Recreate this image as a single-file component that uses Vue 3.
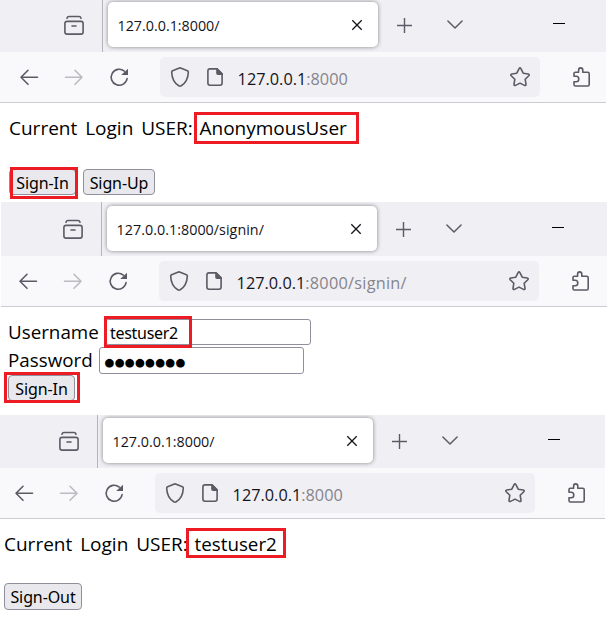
<script setup>
const windows = [
  { id: 'home', tab: '127.0.0.1:8000/', port: ':8000', user: 'AnonymousUser', buttons: ['Sign-In', 'Sign-Up'] },
  { id: 'signin', tab: '127.0.0.1:8000/signin/', port: ':8000/signin/' },
  { id: 'done', tab: '127.0.0.1:8000/', port: ':8000', user: 'testuser2', buttons: ['Sign-Out'] }
]
</script>

<template>
  <main class="sheet">
    <section v-for="w in windows" :key="w.id" class="window" :class="w.id">
      <header class="chrome">
        <div class="tabs">
          <svg class="icon library" viewBox="0 0 20 20"><rect x=".9" y="6.4" width="18.2" height="12.7" rx="2.2" /><path d="M3 3.2Q3.4 1.5 5 1.5H15Q16.6 1.5 17 3.2M8 11H12" /></svg>
          <i class="divider"></i>
          <div class="tab">
            <span class="title">{{ w.tab }}</span>
            <svg class="close" viewBox="0 0 12 12"><path d="M1.3 1.3L10.7 10.7M10.7 1.3L1.3 10.7" /></svg>
          </div>
          <svg class="icon plus" viewBox="0 0 20 20"><path d="M10.5 3V18M3 10.5H18" /></svg>
          <svg class="icon chevron" viewBox="0 0 20 20"><path d="M2.9 6L10 13L17.1 6" /></svg>
          <svg class="icon minimize" viewBox="0 0 20 20"><path d="M4 8.5H16" /></svg>
        </div>
        <div class="toolbar">
          <svg class="icon back" viewBox="0 0 20 20"><path d="M18.5 10.3H2M9 3.3L2 10.3L9 17.3" /></svg>
          <svg class="icon forward" viewBox="0 0 20 20"><path d="M1.5 10.3H18M11 3.3L18 10.3L11 17.3" /></svg>
          <svg class="icon reload" viewBox="0 0 20 20"><path d="M18.1 11.5A8 8 0 1 1 15.3 4.1" /><path class="solid" d="M19 1.7V8.1H12.2Z" /></svg>
          <div class="urlbar">
            <svg class="icon shield" viewBox="0 0 20 20"><path d="M10 .9Q10.6 .9 11.2 1.3L17.4 3.7Q18.4 4.1 18.3 5.2Q18 14.6 11.2 18.8Q10 19.5 8.8 18.8Q2 14.6 1.7 5.2Q1.6 4.1 2.6 3.7L8.8 1.3Q9.4 .9 10 .9Z" /></svg>
            <svg class="icon doc" viewBox="0 0 20 20"><path d="M12 1.9H5Q2.9 1.9 2.9 4V16.1Q2.9 18.2 5 18.2H15Q17.1 18.2 17.1 16.1V7Z" /><path class="solid" d="M11.2 1.2H12.5L17.9 6.6V8H13Q11.2 8 11.2 6.2Z" /></svg>
            <span class="url">127.0.0.1<span class="port">{{ w.port }}</span></span>
            <svg class="icon star" viewBox="0 0 20 20"><path d="M9.1 1.6Q10 .2 10.9 1.6L13.2 6.2L18.2 7Q19.8 7.4 18.8 8.7L15.2 12.3L16 17.3Q16.1 19 14.5 18.4L10 16.1L5.5 18.4Q3.9 19 4 17.3L4.8 12.3L1.2 8.7Q.2 7.4 1.8 7L6.8 6.2Z" /></svg>
          </div>
          <svg class="icon puzzle" viewBox="0 0 20 20"><path d="M2 9.2V6.6Q2 5.3 3.3 5.3H6.6V3.4Q6.6 .9 8.7 .9Q10.8 .9 10.8 3.4V5.3H15.8Q17.2 5.3 17.2 6.7V17.6Q17.2 19 15.8 19H3.4Q2 19 2 17.6V14.7H4.2Q6.8 14.7 6.8 12Q6.8 9.2 4.2 9.2Z" /></svg>
        </div>
      </header>

      <div v-if="w.user" class="page">
        <p class="status"><span class="caption">Current Login USER:</span><span class="user">{{ w.user }}</span></p>
        <div class="actions"><button v-for="b in w.buttons" :key="b">{{ b }}</button></div>
      </div>
      <form v-else class="page login" @submit.prevent>
        <div class="field"><label class="name">Username</label><div class="input">testuser2</div></div>
        <div class="field second"><label class="pass">Password</label><div class="input dots">●●●●●●●●</div></div>
        <button>Sign-In</button>
      </form>
      <i class="mark first"></i>
      <i v-if="w.id !== 'done'" class="mark last"></i>
    </section>
  </main>
</template>

<style>
body { margin: 0; background: #fff; }
</style>

<style scoped>
* { box-sizing: border-box; }
.sheet { width: 608px; height: 620px; overflow: hidden; background: #fff; font-family: "Open Sans", "Noto Sans", sans-serif; color: #000; }
.window { position: relative; }
.home { height: 202px; }
.signin { height: 213px; }
.done { height: 205px; }
.chrome { width: 606px; overflow: hidden; background: #f9f9fb; border-bottom: 1px solid #ccccd0; }
.signin .chrome { margin-left: 1px; }
.done .chrome { width: 605px; }
.signin .tabs, .signin .toolbar { padding-left: 0; margin-left: -2px; }
.done .tabs, .done .toolbar { margin-left: -5px; }
.tabs { display: flex; align-items: flex-end; width: 612px; height: 52px; background: #f0eff4; }
.signin .tabs { height: 54px; }
.done .tabs { height: 53px; }
.toolbar { display: flex; align-items: center; width: 612px; height: 50px; }
.icon { display: block; flex: none; width: 20px; height: 20px; fill: none; stroke: #5b5b66; stroke-width: 1.6; stroke-linecap: round; stroke-linejoin: round; }
.icon .solid { fill: #5b5b66; stroke: none; }
.library { margin: 0 18px 17px 64px; }
.divider { flex: none; width: 1px; height: 100%; background: #b4b4ba; }
.tab { display: flex; flex: none; align-items: center; justify-content: space-between; width: 270px; height: 45px; margin: 0 0 5px 5px; padding: 0 15px 0 9.5px; border-radius: 5px; background: #fff; box-shadow: 0 0 4px rgba(0, 0, 0, .45); }
.title { padding-top: 3px; font-size: 14.3px; line-height: 20px; color: #15141a; white-space: nowrap; }
.signin .title { letter-spacing: .04px; }
.close { width: 12px; height: 12px; fill: none; stroke: #15141a; stroke-width: 1.3; }
.plus { margin: 0 0 17px 16px; stroke-width: 1.4; stroke-linecap: butt; }
.chevron { margin: 0 0 17px 31px; stroke-width: 1.5; }
.minimize { margin: 0 0 17px 84px; stroke: #000; stroke-width: 1; stroke-linecap: butt; }
.back { margin-left: 19px; }
.forward { margin-left: 25px; stroke: #bbbbc0; }
.reload { margin-left: 25px; }
.urlbar { display: flex; flex: none; align-items: center; width: 380px; height: 40px; margin-left: 31px; padding: 0 10px; border-radius: 5px; background: #f0eff4; }
.doc { margin-left: 15px; }
.url { padding: 4px 0 0 12.6px; font-size: 16.3px; line-height: 24px; color: #15141a; white-space: nowrap; }
.port { color: #85858c; }
.signin .port { letter-spacing: .25px; }
.star { margin-left: auto; }
.puzzle { margin-left: 32px; }
.page { padding: 11px 0 0 9px; }
.done .page { padding: 11px 0 0 4px; }
.status { display: flex; height: 29px; margin: 0; font-size: 19px; line-height: 29px; white-space: nowrap; }
.caption { flex: none; width: 190px; word-spacing: 3px; }
.user { padding-left: .5px; }
.done .user { font-size: 18.8px; }
.actions { display: flex; gap: 7px; margin-top: 26px; }
button { display: block; width: 67px; height: 26px; padding: 1px 0 0; border: 1px solid #8f8f9d; border-radius: 4px; background: #e9e9ed; color: #000; font: 16px/24px "Noto Sans", sans-serif; letter-spacing: -.1px; text-align: center; white-space: nowrap; }
.actions button + button { width: 72px; }
.done .actions { margin-top: 24px; }
.done button { width: 78px; height: 27px; }
.login { padding: 12px 0 0 8px; }
.field { display: flex; height: 27px; font-size: 18.8px; }
.second { height: 29px; padding-top: 1px; }
.field label { flex: none; line-height: 27px; white-space: nowrap; }
.name { width: 97px; }
.pass { width: 91px; }
.input { width: 206px; height: 26px; padding-left: 4px; border: 1px solid #8f8f9d; border-radius: 3px; background: #fff; font: 16px/27px "Noto Sans", sans-serif; letter-spacing: -.3px; }
.second .input { width: 205px; height: 27px; }
.second .dots { padding-left: 4.5px; font: 11.4px/28px "DejaVu Sans", sans-serif; letter-spacing: .2px; }
.mark { position: absolute; border: 3px solid #ed1c24; }
.home .first { left: 194px; top: 112px; width: 165px; height: 32px; }
.home .last { left: 10px; top: 167px; width: 68px; height: 32px; }
.signin .first { left: 104px; top: 114px; width: 88px; height: 32px; }
.signin .last { left: 4px; top: 170px; width: 76px; height: 31px; }
.done .first { left: 186px; top: 113px; width: 100px; height: 30px; }
</style>
